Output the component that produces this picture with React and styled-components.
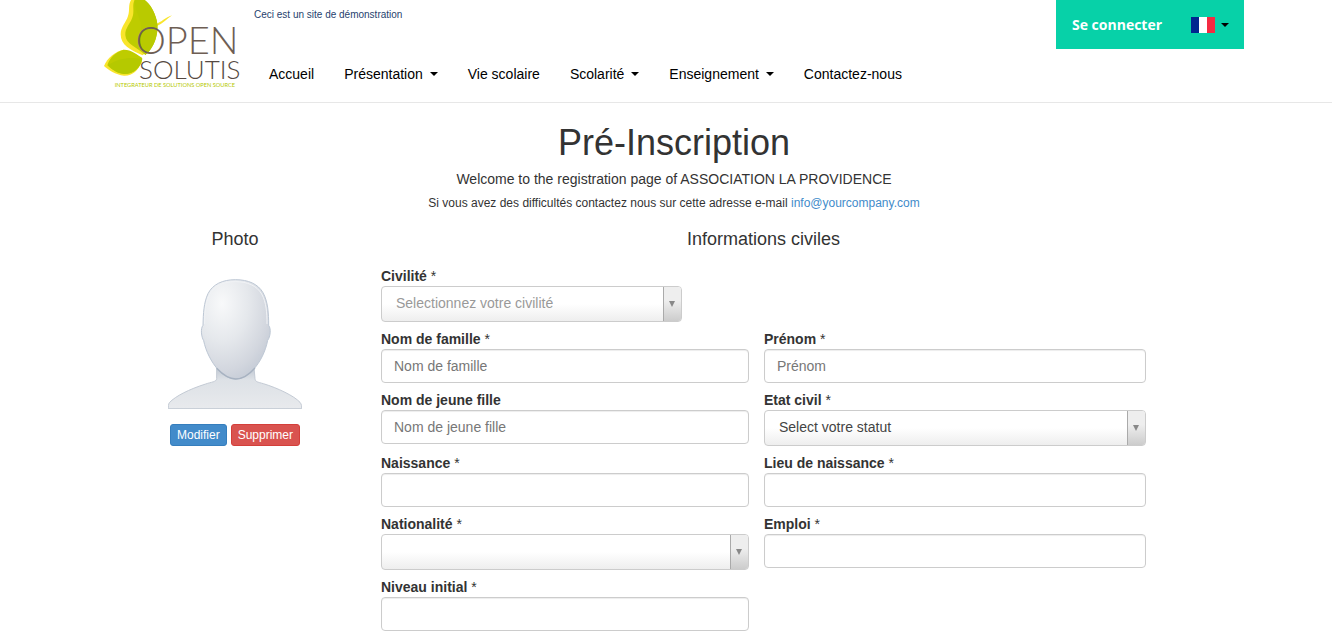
import React, { useState } from "react";
import styled, { createGlobalStyle } from "styled-components";

const links = [
  { label: "Accueil" },
  { label: "Présentation", menu: true },
  { label: "Vie scolaire" },
  { label: "Scolarité", menu: true },
  { label: "Enseignement", menu: true },
  { label: "Contactez-nous" },
];

const fields = [
  { id: "civilite", label: "Civilité", required: true, select: true, hint: "Selectionnez votre civilité", options: ["Madame", "Monsieur"], wide: true },
  { id: "nom", label: "Nom de famille", required: true, hint: "Nom de famille" },
  { id: "prenom", label: "Prénom", required: true, hint: "Prénom" },
  { id: "jeune-fille", label: "Nom de jeune fille", hint: "Nom de jeune fille" },
  { id: "etat", label: "Etat civil", required: true, select: true, options: ["Select votre statut", "Célibataire", "Marié(e)"] },
  { id: "naissance", label: "Naissance", required: true },
  { id: "lieu", label: "Lieu de naissance", required: true },
  { id: "nationalite", label: "Nationalité", required: true, select: true, hint: " ", options: ["Française"] },
  { id: "emploi", label: "Emploi", required: true },
  { id: "niveau", label: "Niveau initial", required: true },
];

const Logo = () => (
  <LogoSvg viewBox="27 0 408 270" role="img" aria-label="Open Solutis">
    <path
      d="M108 0C99 15 105 32 99 48C93 68 77 80 77 103C77 135 105 150 143 166L160 150L134 0Z"
      fill="#f9e52c"
    />
    <path d="M180 73C199 67 211 53 231 46C216 57 205 70 182 80Z" fill="#f9e52c" />
    <path
      d="M119 0C111 14 118 28 114 46C109 70 89 83 91 106C94 134 122 139 151 165C177 146 194 99 185 61C178 31 163 10 149 0Z"
      fill="#becc00"
    />
    <path d="M119 0C116 31 141 53 138 91C136 121 141 145 151 165C177 146 194 99 185 61C178 31 163 10 149 0Z" fill="#b9ca00" />
    <path
      d="M86 149C62 153 36 174 27 198C40 210 61 224 87 227C112 228 129 211 141 185Z"
      fill="#f9e52c"
    />
    <path
      d="M86 149C107 148 127 164 142 174C136 204 116 222 87 222C66 220 49 208 37 196C43 174 62 155 86 149Z"
      fill="#becc00"
    />
    <path d="M40 195C73 174 102 171 142 177C136 204 116 222 87 222C66 220 49 208 40 195Z" fill="#b5c900" />
    <LogoText x="122" y="163" fontSize="114" fill="#6e5e54">OPEN</LogoText>
    <LogoText x="132" y="236" fontSize="78" fill="#554942">SOLUTIS</LogoText>
    <Tagline x="59" y="262" fontSize="17">INTEGRATEUR DE SOLUTIONS OPEN SOURCE</Tagline>
  </LogoSvg>
);

const Avatar = () => (
  <AvatarSvg viewBox="0 0 402 390" role="img" aria-label="Photo">
    <defs>
      <radialGradient id="face" cx="30%" cy="24%" r="85%">
        <stop offset="0" stopColor="#f8f9fa" />
        <stop offset="0.45" stopColor="#e5e8ec" />
        <stop offset="0.8" stopColor="#d2d6de" />
        <stop offset="1" stopColor="#c3cad5" />
      </radialGradient>
      <linearGradient id="body" x1="0" y1="0" x2="0" y2="1">
        <stop offset="0" stopColor="#bfc7d2" />
        <stop offset="0.3" stopColor="#dde1e6" />
        <stop offset="1" stopColor="#e8eaed" />
      </linearGradient>
    </defs>
    <path
      d="M146 265V299C145 309 130 309 113 315C63 331 23 351 4 371C1 376 1 383 1 389H401C401 382 401 376 396 370C379 351 329 327 286 314C269 309 262 309 261 299L258 265Z"
      fill="url(#body)"
      stroke="#c3cad4"
      strokeWidth="3"
    />
    <path
      d="M202 2C164 2 134 16 120 44C107 72 106 103 105 139C97 149 100 174 107 185C113 215 129 249 152 274C168 291 185 300 203 300C221 300 238 291 254 274C278 249 293 215 299 184C307 174 310 149 302 139C302 103 300 68 285 41C270 15 241 2 202 2Z"
      fill="url(#face)"
      stroke="#bdc7d4"
      strokeWidth="3"
    />
    <path
      d="M110 135C110 102 112 72 125 47C138 20 166 8 202 8C239 8 266 20 281 45C295 70 297 102 297 135"
      fill="none"
      stroke="#f1f3f6"
      strokeWidth="3"
    />
    <path d="M146 268C168 291 185 300 203 300C221 300 240 291 261 267" fill="none" stroke="#a7b2c1" strokeWidth="4" />
  </AvatarSvg>
);

const Flag = () => (
  <svg width="24" height="16" viewBox="0 0 24 16" aria-hidden="true">
    <path d="M0 0h8v16H0z" fill="#00268f" />
    <path d="M8 0h8v16H8z" fill="#fff" />
    <path d="M16 0h8v16h-8z" fill="#f42a41" />
  </svg>
);

const Field = ({ field }) => {
  const [value, setValue] = useState("");
  const { id, label, required, select, hint, options, wide } = field;
  const onChange = (e) => setValue(e.target.value);

  return (
    <FieldCell $wide={wide}>
      <Label htmlFor={id}>
        {label}
        {required && <Star> *</Star>}
      </Label>
      {select ? (
        <SelectBox $short={wide}>
          <Select id={id} value={value} onChange={onChange} $empty={!!hint && !value}>
            {hint && <option value="">{hint}</option>}
            {options.map((option, i) => (
              <option key={option} value={!hint && i === 0 ? "" : option}>
                {option}
              </option>
            ))}
          </Select>
          <SelectArrow>
            <svg width="6" height="6" viewBox="0 0 6 6" aria-hidden="true">
              <path d="M0 0h6L3 6z" fill="#888" />
            </svg>
          </SelectArrow>
        </SelectBox>
      ) : (
        <Input id={id} type="text" placeholder={hint} value={value} onChange={onChange} />
      )}
    </FieldCell>
  );
};

const App = () => {
  return (
    <>
      <GlobalStyle />
      <Header>
        <HeaderInner>
          <LogoLink href="#">
            <Logo />
          </LogoLink>
          <HeaderMain>
            <Notice>Ceci est un site de démonstration</Notice>
            <Nav>
              {links.map((link) => (
                <NavLink key={link.label} href="#">
                  {link.label}
                  {link.menu && <Caret />}
                </NavLink>
              ))}
            </Nav>
          </HeaderMain>
          <Account>
            <LoginLink href="#">Se connecter</LoginLink>
            <LangButton type="button" aria-label="Français">
              <Flag />
              <Caret />
            </LangButton>
          </Account>
        </HeaderInner>
      </Header>
      <Main>
        <Title>Pré-Inscription</Title>
        <Welcome>Welcome to the registration page of ASSOCIATION LA PROVIDENCE</Welcome>
        <Help>
          Si vous avez des difficultés contactez nous sur cette adresse e-mail{" "}
          <a href="mailto:info@yourcompany.com">info@yourcompany.com</a>
        </Help>
        <Columns>
          <Photo>
            <SectionTitle>Photo</SectionTitle>
            <Avatar />
            <Buttons>
              <Button type="button">Modifier</Button>
              <Button type="button" $danger>
                Supprimer
              </Button>
            </Buttons>
          </Photo>
          <section>
            <SectionTitle>Informations civiles</SectionTitle>
            <Form>
              {fields.map((field) => (
                <Field key={field.id} field={field} />
              ))}
            </Form>
          </section>
        </Columns>
      </Main>
    </>
  );
};

const GlobalStyle = createGlobalStyle`
  * {
    box-sizing: border-box;
  }
  body {
    margin: 0;
    background: #fff;
    color: #333;
    font-family: "Liberation Sans", Arial, sans-serif;
    font-size: 14px;
    line-height: 20px;
  }
  a {
    color: #428bca;
    text-decoration: none;
  }
`;

const Header = styled.header`
  padding-left: 16px;
  border-bottom: 1px solid #e7e7e7;
`;

const HeaderInner = styled.div`
  display: flex;
  align-items: flex-start;
  max-width: 1140px;
  min-height: 102px;
  margin: 0 auto;
`;

const LogoLink = styled.a`
  flex: 0 0 150px;
`;

const LogoSvg = styled.svg`
  display: block;
  width: 136px;
  height: 90px;
`;

const LogoText = styled.text`
  font-family: Lato, sans-serif;
  font-weight: 300;
`;

const Tagline = styled.text`
  font-family: Lato, sans-serif;
  fill: #b5c900;
`;

const HeaderMain = styled.div`
  flex: 1;
`;

const Notice = styled.p`
  margin: 5px 0 0;
  color: #1f3f6e;
  font-size: 10px;
`;

const Nav = styled.nav`
  display: flex;
  margin-top: 24px;
`;

const NavLink = styled.a`
  display: flex;
  align-items: center;
  gap: 7px;
  padding: 15px;
  color: #000;
`;

const Caret = styled.span`
  border-top: 4px solid #000;
  border-right: 4px solid transparent;
  border-left: 4px solid transparent;
`;

const Account = styled.div`
  display: flex;
  align-items: center;
  justify-content: space-between;
  width: 188px;
  height: 49px;
  padding: 0 15px 0 16px;
  background: #07d1a8;
`;

const LoginLink = styled.a`
  color: #fff;
  font-family: "Open Sans", sans-serif;
  font-weight: bold;
`;

const LangButton = styled.button`
  display: flex;
  align-items: center;
  gap: 6px;
  padding: 0;
  border: 0;
  background: none;
`;

const Main = styled.main`
  padding: 20px 0 8px 16px;
  text-align: center;
`;

const Title = styled.h1`
  margin: 0 0 6px;
  font-size: 36px;
  font-weight: 500;
  line-height: 40px;
`;

const Welcome = styled.p`
  margin: 0 0 4px;
`;

const Help = styled.p`
  margin: 0;
  font-size: 12px;
`;

const Columns = styled.div`
  display: grid;
  grid-template-columns: 292px minmax(0, 765px);
  max-width: 1170px;
  margin: 16px auto 0;
`;

const SectionTitle = styled.h4`
  margin: 0;
  font-size: 18px;
  font-weight: 500;
`;

const Photo = styled.section`
  display: flex;
  flex-direction: column;
  align-items: center;
`;

const AvatarSvg = styled.svg`
  width: 134px;
  height: 130px;
  margin: 30px 0 15px;
`;

const Buttons = styled.div`
  display: flex;
  gap: 4px;
`;

const Button = styled.button`
  padding: 1px 6px;
  border: 1px solid ${({ $danger }) => ($danger ? "#d43f3a" : "#357ebd")};
  border-radius: 3px;
  background: ${({ $danger }) => ($danger ? "#d9534f" : "#428bca")};
  color: #fff;
  font-family: inherit;
  font-size: 12px;
  line-height: 18px;
`;

const Form = styled.form`
  display: grid;
  grid-template-columns: 368fr 382fr;
  gap: 7px 15px;
  align-items: start;
  margin-top: 17px;
  text-align: left;
`;

const FieldCell = styled.div`
  grid-column: ${({ $wide }) => ($wide ? "1 / -1" : "auto")};
`;

const Label = styled.label`
  display: block;
  font-weight: bold;
`;

const Star = styled.span`
  font-weight: normal;
`;

const Input = styled.input`
  display: block;
  width: 100%;
  height: 34px;
  padding: 6px 12px;
  border: 1px solid #ccc;
  border-radius: 4px;
  background: #fff;
  box-shadow: inset 0 1px 1px rgba(0, 0, 0, 0.075);
  color: #555;
  font: inherit;
  &::placeholder {
    color: #777;
  }
`;

const SelectBox = styled.div`
  position: relative;
  max-width: ${({ $short }) => ($short ? "301px" : "none")};
`;

const Select = styled.select`
  display: block;
  width: 100%;
  height: 36px;
  padding: 0 32px 2px 14px;
  border: 1px solid #ccc;
  border-radius: 4px;
  appearance: none;
  background: linear-gradient(to top, #eee 0%, #fff 50%);
  color: ${({ $empty }) => ($empty ? "#999" : "#444")};
  font: inherit;
`;

const SelectArrow = styled.span`
  position: absolute;
  top: 1px;
  right: 1px;
  bottom: 1px;
  display: flex;
  align-items: center;
  justify-content: center;
  width: 18px;
  padding: 0 1px 1px 0;
  border-left: 1px solid #aaa;
  border-radius: 0 3px 3px 0;
  background: linear-gradient(to top, #ccc 0%, #eee 60%);
  pointer-events: none;
`;

export default App;
